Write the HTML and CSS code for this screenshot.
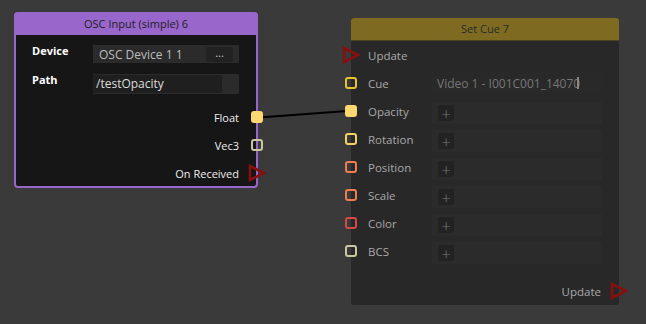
FILE: index.html
```html
<!DOCTYPE html>
<html>
<head>
  <title>Node Editor</title>
  <link rel="stylesheet" href="styles.css">
</head>
<body>
  <div class="canvas">
    <svg class="wires" width="646" height="324">
      <line x1="259" y1="117.5" x2="347" y2="111" stroke="#000" stroke-width="2"/>
    </svg>

    <!-- OSC input node -->
    <div class="node osc-node">
      <div class="node-header osc-header">OSC Input (simple) 6</div>
      <div class="node-body">
        <div class="param">
          <span class="param-name">Device</span>
          <div class="field device-field">
            <span class="field-text">OSC Device 1 1</span>
            <span class="dots-btn">...</span>
          </div>
        </div>
        <div class="param">
          <span class="param-name">Path</span>
          <div class="field path-field">
            <span class="path-input">/testOpacity</span>
          </div>
        </div>
        <div class="outputs">
          <div class="out-row">
            <span class="out-label">Float</span>
            <span class="port"><span class="dot filled yellow"></span></span>
          </div>
          <div class="out-row">
            <span class="out-label">Vec3</span>
            <span class="port"><span class="dot beige"></span></span>
          </div>
          <div class="out-row">
            <span class="out-label">On Received</span>
            <span class="port">
              <svg width="18" height="18" viewBox="0 0 18 18"><polygon points="2,2 16,9 2,16" fill="none" stroke="#861010" stroke-width="2.6"/></svg>
            </span>
          </div>
        </div>
      </div>
    </div>

    <!-- Set cue node -->
    <div class="node cue-node">
      <div class="node-header cue-header">Set Cue 7</div>
      <div class="cue-body">
        <div class="in-row">
          <span class="port in-port">
            <svg width="18" height="18" viewBox="0 0 18 18"><polygon points="2,2 16,9 2,16" fill="none" stroke="#861010" stroke-width="2.6"/></svg>
          </span>
          <span class="in-label">Update</span>
        </div>
        <div class="in-row">
          <span class="port in-port"><span class="dot gold"></span></span>
          <span class="in-label">Cue</span>
          <div class="in-field cue-field"><span class="cue-text">Video 1 - I001C001_14070</span><span class="caret"></span></div>
        </div>
        <div class="in-row">
          <span class="port in-port"><span class="dot filled yellow"></span></span>
          <span class="in-label">Opacity</span>
          <div class="in-field"><span class="plus">+</span></div>
        </div>
        <div class="in-row">
          <span class="port in-port"><span class="dot yellow"></span></span>
          <span class="in-label">Rotation</span>
          <div class="in-field"><span class="plus">+</span></div>
        </div>
        <div class="in-row">
          <span class="port in-port"><span class="dot orange"></span></span>
          <span class="in-label">Position</span>
          <div class="in-field"><span class="plus">+</span></div>
        </div>
        <div class="in-row">
          <span class="port in-port"><span class="dot orange"></span></span>
          <span class="in-label">Scale</span>
          <div class="in-field"><span class="plus">+</span></div>
        </div>
        <div class="in-row">
          <span class="port in-port"><span class="dot red"></span></span>
          <span class="in-label">Color</span>
          <div class="in-field"><span class="plus">+</span></div>
        </div>
        <div class="in-row">
          <span class="port in-port"><span class="dot beige"></span></span>
          <span class="in-label">BCS</span>
          <div class="in-field"><span class="plus">+</span></div>
        </div>
        <div class="cue-out">
          <span class="in-label">Update</span>
          <span class="port out-port">
            <svg width="18" height="18" viewBox="0 0 18 18"><polygon points="2,2 16,9 2,16" fill="none" stroke="#861010" stroke-width="2.6"/></svg>
          </span>
        </div>
      </div>
    </div>
  </div>
</body>
</html>
```

FILE: styles.css
```css
body {
  margin: 0;
  background: #3a3a3a;
  font-family: "Open Sans", "Noto Sans", sans-serif;
  font-size: 11px;
}

.canvas {
  position: relative;
  width: 646px;
  height: 324px;
  overflow: hidden;
}

.wires {
  position: absolute;
  left: 0;
  top: 0;
}

.node {
  position: absolute;
  box-sizing: border-box;
}

.node-header {
  text-align: center;
}

/* osc node */
.osc-node {
  left: 14px;
  top: 12px;
  width: 244px;
  height: 176px;
  border: 2px solid #9966cc;
  border-top: none;
  border-radius: 4px;
  background: #161616;
}

.osc-header {
  height: 23px;
  line-height: 23px;
  margin: 0 -2px;
  background: #9966cc;
  border-radius: 4px 4px 0 0;
  color: #1d1d1d;
}

.node-body {
  padding: 10px 0 0 16px;
}

.param {
  display: flex;
  align-items: flex-start;
  margin-bottom: 11px;
}

.param-name {
  width: 61px;
  color: #fff;
  font-weight: bold;
  line-height: 12px;
}

.field {
  width: 146px;
  background: #2b2b2b;
  display: flex;
  align-items: center;
  box-sizing: border-box;
}

.device-field {
  height: 18px;
  padding-left: 6px;
  justify-content: space-between;
}

.field-text {
  color: #bdbdbd;
  font-size: 12px;
}

.dots-btn {
  width: 27px;
  height: 15px;
  margin-right: 6px;
  background: #222;
  color: #ccc;
  text-align: center;
  line-height: 12px;
  border-radius: 2px;
}

.path-field {
  height: 20px;
}

.path-input {
  width: 129px;
  height: 18px;
  line-height: 18px;
  background: #1f1f1f;
  color: #ddd;
  font-size: 12px;
  padding-left: 3px;
  box-sizing: border-box;
  border-radius: 2px;
}

.outputs {
  margin-top: -2px;
}

.out-row {
  display: flex;
  justify-content: flex-end;
  align-items: center;
  height: 28px;
}

.out-label {
  color: #eee;
  margin-right: 8px;
}

.port {
  width: 20px;
  height: 20px;
  display: flex;
  align-items: center;
  justify-content: center;
  margin-right: -11px;
}

.dot {
  width: 12px;
  height: 12px;
  border: 2px solid;
  border-radius: 3px;
  box-sizing: border-box;
}

.dot.filled.yellow { background: #fdd870; border-color: #fdd870; }
.dot.yellow { border-color: #f3d065; }
.dot.gold { border-color: #e6c233; }
.dot.orange { border-color: #ef7d50; }
.dot.red { border-color: #d94848; }
.dot.beige { border-color: #c9c7a0; }

/* set cue node */
.cue-node {
  left: 351px;
  top: 18px;
  width: 268px;
  height: 287px;
  background: #282828;
  border-radius: 3px;
}

.cue-header {
  height: 22px;
  line-height: 22px;
  background: #7e6b21;
  color: #2a2a2a;
  border-radius: 3px 3px 0 0;
  border-bottom: 1px solid #4d4420;
}

.in-row {
  display: flex;
  align-items: center;
  height: 28px;
}

.in-port {
  margin-left: -10px;
  margin-right: 0;
}

.in-label {
  width: 64px;
  margin-left: 7px;
  color: #a8a8a8;
  font-size: 11.5px;
}

.in-field {
  width: 170px;
  height: 22px;
  background: #2b2b2b;
  display: flex;
  align-items: center;
  margin-top: 4px;
}

.plus {
  width: 16px;
  height: 16px;
  margin-left: 6px;
  background: #222;
  color: #777;
  text-align: center;
  line-height: 17px;
  font-size: 17px;
  font-weight: 300;
  border-radius: 2px;
}

.cue-field {
  margin-top: 0;
  background: #292929;
}

.cue-text {
  width: 143px;
  margin-left: 5px;
  color: #777;
  font-size: 12px;
  white-space: nowrap;
  overflow: hidden;
}

.caret {
  width: 2px;
  height: 12px;
  margin-left: -3px;
  background: #888;
}

.cue-out {
  display: flex;
  justify-content: flex-end;
  align-items: center;
  height: 26px;
  margin-top: 13px;
}

.cue-out .in-label {
  width: auto;
  margin-right: 8px;
}

.out-port {
  margin-right: -10px;
}
```
